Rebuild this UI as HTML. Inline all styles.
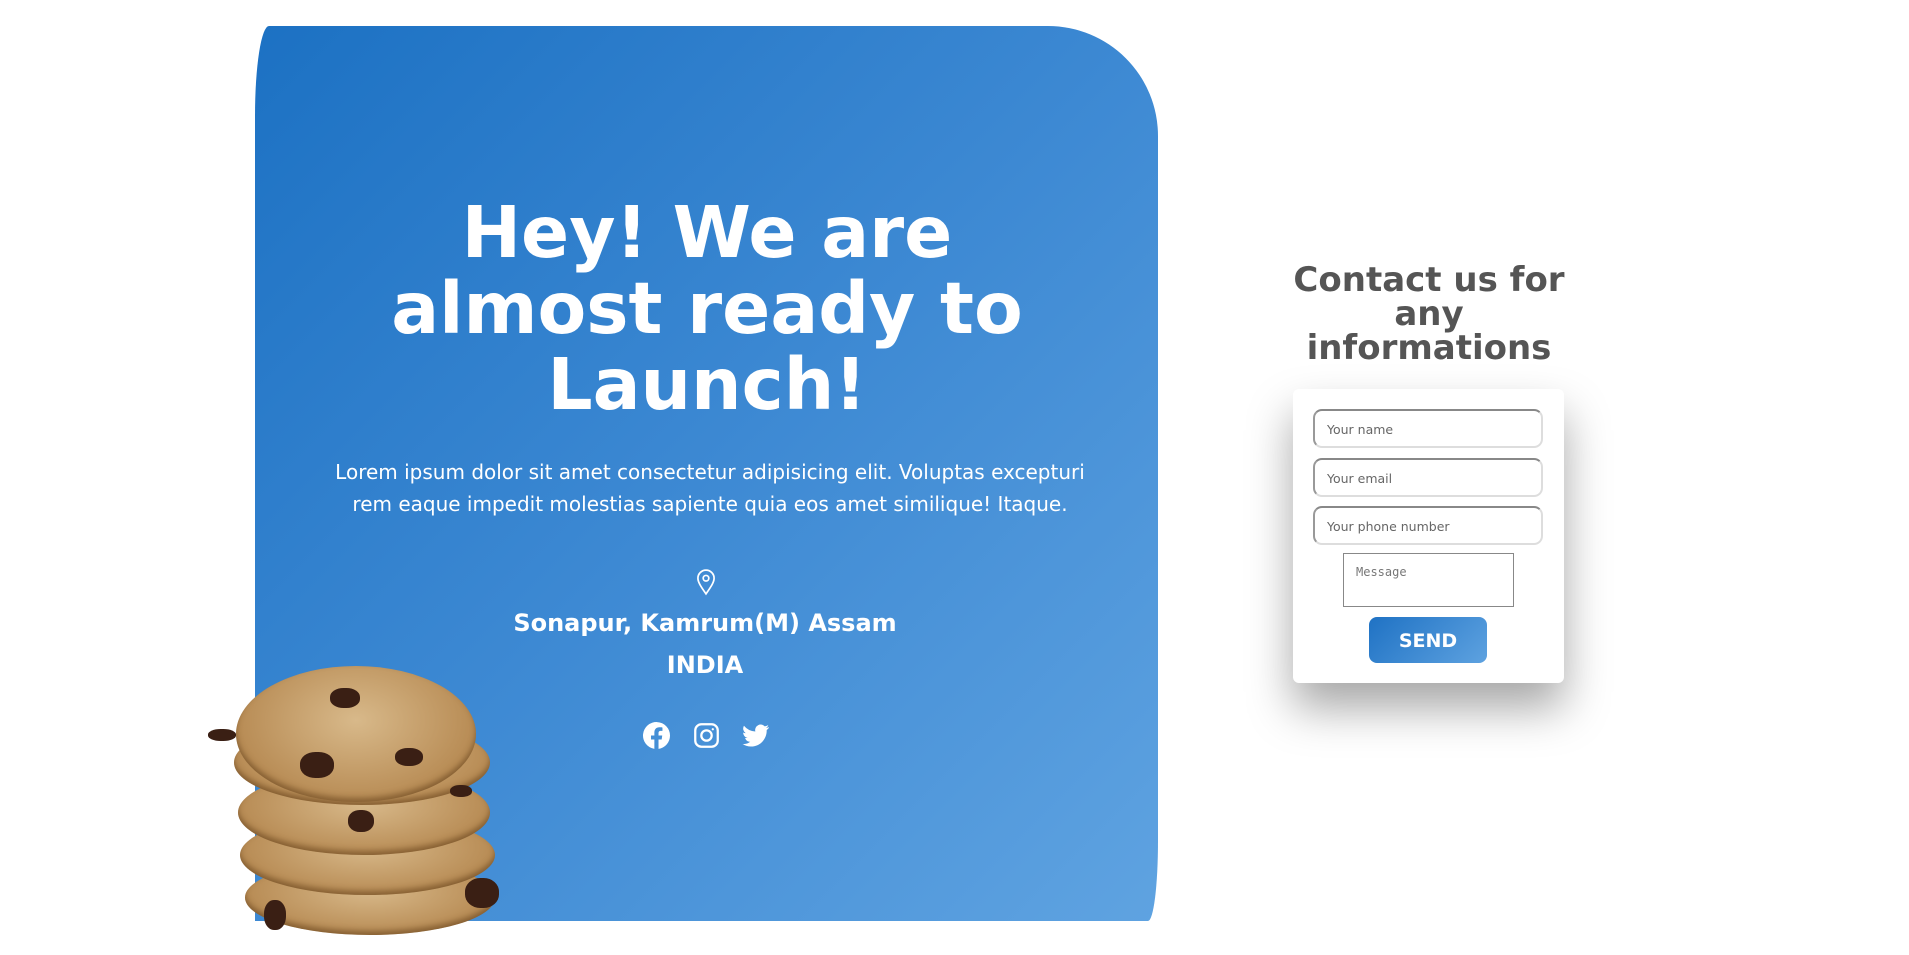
<!DOCTYPE html>
<html><head><meta charset="utf-8">
<style>
*{margin:0;padding:0;box-sizing:border-box}
html,body{width:1909px;height:955px;background:#fff;overflow:hidden;font-family:"DejaVu Sans","Liberation Sans",sans-serif}
.panel{position:absolute;left:255px;top:26px;width:903px;height:895px;
 background:linear-gradient(135deg,#1c71c3 0%,#3d89d3 50%,#5fa3e1 100%);
 border-radius:14px 110px 10px 0/ 90px 110px 80px 0;}
h1{position:absolute;left:352px;width:710px;top:195px;text-align:center;color:#fff;font-size:71px;line-height:76px;font-weight:bold}
.p{position:absolute;left:330px;width:760px;top:456px;text-align:center;color:#fff;font-size:20px;line-height:32px}
.addr{position:absolute;left:405px;width:600px;top:602px;text-align:center;color:#fff;font-size:24px;font-weight:bold;line-height:42px}
.pin{position:absolute;left:693px;top:568px}
.soc{position:absolute;top:722px}
.contact{position:absolute;left:1279px;width:300px;top:263px;text-align:center;color:#555;font-size:34px;line-height:34px;font-weight:bold}
.card{position:absolute;left:1293px;top:389px;width:271px;height:294px;background:#fff;border-radius:6px;box-shadow:0 25px 45px rgba(0,0,0,.35)}
.in{position:absolute;left:20px;width:230px;height:39px;border-radius:9px;border:2px solid #ddd;border-top-color:#888;border-left-color:#999;font-family:"DejaVu Sans",sans-serif;font-size:12.5px;color:#666;padding:11px 0 0 12px}
.ta{position:absolute;left:50px;top:164px;width:171px;height:54px;border:1px solid #888;font-family:"DejaVu Sans Mono",monospace;font-size:12px;color:#777;padding:11px 12px}
.btn{position:absolute;left:76px;top:228px;width:118px;height:46px;border-radius:8px;background:linear-gradient(135deg,#1f72c4,#5ea2e0);color:#fff;font-weight:bold;font-size:19px;text-align:center;line-height:48px}
.ck{position:absolute;border-radius:50%;background:radial-gradient(ellipse at 50% 40%,#d8b98a,#b88c55 70%,#8a6437);box-shadow:inset 0 -4px 6px rgba(90,55,20,.5)}
.ch{position:absolute;background:#3a1f14;border-radius:45%}
</style></head><body>
<div class="panel"></div>
<h1>Hey! We are almost ready to Launch!</h1>
<div class="p">Lorem ipsum dolor sit amet consectetur adipisicing elit. Voluptas excepturi rem eaque impedit molestias sapiente quia eos amet similique! Itaque.</div>
<svg class="pin" width="26" height="28" viewBox="0 0 24 26" fill="none" stroke="#fff" stroke-width="1.6"><path d="M12 24C7 17 4.5 13 4.5 9.5a7.5 7.5 0 0 1 15 0C19.5 13 17 17 12 24z"/><circle cx="12" cy="9.5" r="2.6"/></svg>
<div class="addr">Sonapur, Kamrum(M) Assam<br>INDIA</div>
<svg class="soc" style="left:643px" width="27" height="27" viewBox="0 0 24 24"><path fill="#fff" d="M24 12a12 12 0 1 0-13.9 11.9v-8.4H7.1V12h3V9.4c0-3 1.8-4.7 4.5-4.7 1.3 0 2.7.2 2.7.2v3h-1.5c-1.5 0-2 .9-2 1.9V12h3.3l-.5 3.5h-2.8v8.4A12 12 0 0 0 24 12z"/></svg>
<svg class="soc" style="left:693px" width="27" height="27" viewBox="0 0 24 24" fill="none" stroke="#fff" stroke-width="2"><rect x="2" y="2" width="20" height="20" rx="5.5"/><circle cx="12" cy="12" r="4.6"/><circle cx="17.6" cy="6.4" r="1" fill="#fff" stroke="none"/></svg>
<svg class="soc" style="left:742px" width="28" height="27" viewBox="0 0 24 24"><path fill="#fff" d="M23.6 4.6c-.9.4-1.8.6-2.8.8 1-.6 1.8-1.5 2.1-2.700-.9.6-2 1-3.1 1.2A4.9 4.9 0 0 0 11.4 8.4 13.9 13.9 0 0 1 1.3 3.3a4.9 4.9 0 0 0 1.5 6.6c-.8 0-1.6-.3-2.2-.6 0 2.4 1.7 4.4 3.9 4.8-.7.2-1.5.2-2.2.1.6 2 2.4 3.4 4.6 3.4A9.9 9.9 0 0 1 0 19.6 14 14 0 0 0 7.5 21.8c9.1 0 14-7.5 14-14v-.6c1-.7 1.8-1.6 2.1-2.6z"/></svg>

<div class="ck" style="left:245px;top:860px;width:250px;height:75px"></div>
<div class="ck" style="left:240px;top:815px;width:255px;height:80px"></div>
<div class="ck" style="left:238px;top:770px;width:252px;height:85px"></div>
<div class="ck" style="left:234px;top:720px;width:256px;height:85px"></div>
<div class="ck" style="left:236px;top:666px;width:240px;height:136px"></div>
<div class="ch" style="left:208px;top:729px;width:28px;height:12px"></div>
<div class="ch" style="left:330px;top:688px;width:30px;height:20px"></div>
<div class="ch" style="left:300px;top:752px;width:34px;height:26px"></div>
<div class="ch" style="left:395px;top:748px;width:28px;height:18px"></div>
<div class="ch" style="left:450px;top:785px;width:22px;height:12px"></div>
<div class="ch" style="left:348px;top:810px;width:26px;height:22px"></div>
<div class="ch" style="left:465px;top:878px;width:34px;height:30px"></div>
<div class="ch" style="left:264px;top:900px;width:22px;height:30px"></div>

<div class="contact">Contact us for any informations</div>
<div class="card">
 <div class="in" style="top:20px">Your name</div>
 <div class="in" style="top:69px">Your email</div>
 <div class="in" style="top:117px">Your phone number</div>
 <div class="ta">Message</div>
 <div class="btn">SEND</div>
</div>
</body></html>
